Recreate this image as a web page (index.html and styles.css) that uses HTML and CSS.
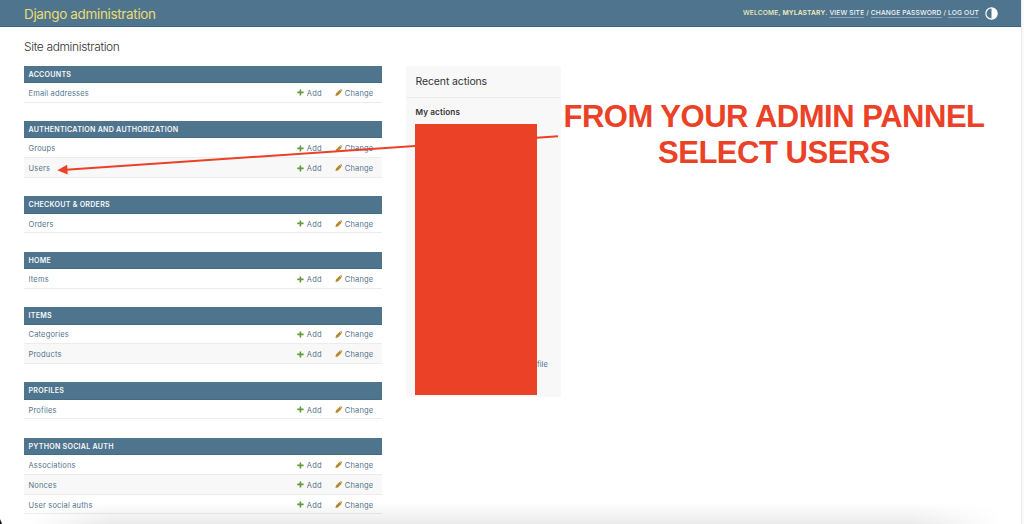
FILE: index.html
```
<!DOCTYPE html>
<html lang="en">
<head>
<meta charset="utf-8">
<title>Site administration | Django site admin</title>
<link rel="stylesheet" href="styles.css">
</head>
<body>
<svg class="defs" aria-hidden="true">
  <symbol id="plus" viewBox="0 0 7 7"><path d="M2.600 .4h1.600v2.200h2.400v1.700H4.200v2.300H2.600V4.300H.3V2.600h2.300z" fill="#5f9c37"/></symbol>
  <symbol id="pencil" viewBox="0 0 8 8"><path d="M.5 7.500l.5-2.600L5 .9l2.100 2.100-4 4zM5.500.6l.5-.4q.4-.2.700 0l1.100 1.100q.2.300 0 .7l-.4.400z" fill="#b58a30"/></symbol>
</svg>
<div class="page">
  <header class="header">
    <h1 class="brand">Django administration</h1>
    <div class="user-tools">
      <span class="tools-text">WELCOME, <strong>MYLASTARY</strong>. <a>VIEW SITE</a> / <a>CHANGE PASSWORD</a> / <a>LOG OUT</a></span>
      <svg class="theme" viewBox="0 0 12 12"><circle cx="6" cy="6" r="5.200" fill="none" stroke="#fff" stroke-width="1.100"/><path d="M6 .6a5.400 5.400 0 0 1 0 10.800z" fill="#fff"/></svg>
    </div>
  </header>
  <main class="content">
    <h2 class="title">Site administration</h2>
    <div class="columns">
      <div class="modules">
        <section class="module"><h3 class="caption">ACCOUNTS</h3>
          <div class="row"><a class="model">Email addresses</a><a class="add"><svg><use href="#plus"/></svg>Add</a><a class="change"><svg><use href="#pencil"/></svg>Change</a></div>
        </section>
        <section class="module"><h3 class="caption">AUTHENTICATION AND AUTHORIZATION</h3>
          <div class="row"><a class="model">Groups</a><a class="add"><svg><use href="#plus"/></svg>Add</a><a class="change"><svg><use href="#pencil"/></svg>Change</a></div>
          <div class="row"><a class="model">Users</a><a class="add"><svg><use href="#plus"/></svg>Add</a><a class="change"><svg><use href="#pencil"/></svg>Change</a></div>
        </section>
        <section class="module"><h3 class="caption">CHECKOUT &amp; ORDERS</h3>
          <div class="row"><a class="model">Orders</a><a class="add"><svg><use href="#plus"/></svg>Add</a><a class="change"><svg><use href="#pencil"/></svg>Change</a></div>
        </section>
        <section class="module"><h3 class="caption">HOME</h3>
          <div class="row"><a class="model">Items</a><a class="add"><svg><use href="#plus"/></svg>Add</a><a class="change"><svg><use href="#pencil"/></svg>Change</a></div>
        </section>
        <section class="module"><h3 class="caption">ITEMS</h3>
          <div class="row"><a class="model">Categories</a><a class="add"><svg><use href="#plus"/></svg>Add</a><a class="change"><svg><use href="#pencil"/></svg>Change</a></div>
          <div class="row"><a class="model">Products</a><a class="add"><svg><use href="#plus"/></svg>Add</a><a class="change"><svg><use href="#pencil"/></svg>Change</a></div>
        </section>
        <section class="module"><h3 class="caption">PROFILES</h3>
          <div class="row"><a class="model">Profiles</a><a class="add"><svg><use href="#plus"/></svg>Add</a><a class="change"><svg><use href="#pencil"/></svg>Change</a></div>
        </section>
        <section class="module"><h3 class="caption">PYTHON SOCIAL AUTH</h3>
          <div class="row"><a class="model">Associations</a><a class="add"><svg><use href="#plus"/></svg>Add</a><a class="change"><svg><use href="#pencil"/></svg>Change</a></div>
          <div class="row"><a class="model">Nonces</a><a class="add"><svg><use href="#plus"/></svg>Add</a><a class="change"><svg><use href="#pencil"/></svg>Change</a></div>
          <div class="row"><a class="model">User social auths</a><a class="add"><svg><use href="#plus"/></svg>Add</a><a class="change"><svg><use href="#pencil"/></svg>Change</a></div>
        </section>
      </div>
      <aside class="recent">
        <h2 class="recent-title">Recent actions</h2>
        <h3 class="recent-sub">My actions</h3>
        <div class="actions"><div class="redaction"></div><a class="action-tail">file</a></div>
      </aside>
    </div>
  </main>
  <div class="dock-shadow"></div>
  <div class="corner"></div>
  <svg class="arrow" viewBox="0 0 1024 524"><path d="M66 169.700L558 136.300" stroke="#ea4127" stroke-width="1.900"/><path d="M57.300 170.300L67.200 164.800L67.700 174.400z" fill="#ea4127"/></svg>
  <p class="note">FROM YOUR ADMIN PANNEL<br>SELECT USERS</p>
</div>
</body>
</html>
```
FILE: styles.css
```
* { box-sizing: border-box; }
body { margin: 0; background: #fff; font-family: Inter, Roboto, sans-serif; color: #333; }
h1, h2, h3, p { margin: 0; font-weight: 400; }
.defs { position: absolute; width: 0; height: 0; }
.page { position: relative; width: 1024px; height: 524px; overflow: hidden; }
.page::after { content: ""; position: absolute; top: 0; right: 0; width: 2px; height: 524px; background: #fafafa; border-left: 1px solid #ececec; }
.header { display: flex; justify-content: space-between; align-items: center; height: 27px; padding: 0 26px 0 24px; background: #4f748d; border-bottom: 1px solid #376987; }
.brand { padding-top: 1px; font-size: 13.500px; line-height: 26px; letter-spacing: -0.340px; color: #ebdc72; white-space: nowrap; }
.user-tools { display: flex; align-items: center; gap: 6px; }
.tools-text { font-size: 6.700px; font-weight: 500; letter-spacing: 0.145px; color: #f3efbd; white-space: nowrap; }
.tools-text a { color: #f5f7f8; border-bottom: 1px solid #8ba3b3; }
.tools-text strong { font-weight: 600; }
.theme { width: 13px; height: 13px; }
.content { padding: 12px 24px 0; }
.title { height: 26.500px; font-size: 12px; font-weight: 300; line-height: 16px; letter-spacing: -0.360px; }
.columns { display: flex; align-items: flex-start; gap: 24px; }
.modules { width: 358px; }
.module { margin-bottom: 18.200px; }
.caption { height: 17.500px; padding-left: 4.500px; background: #4f748d; border-bottom: 1px solid #416d89; color: #f8fafb; font-size: 7.100px; font-weight: 600; line-height: 18.600px; letter-spacing: 0.250px; }
.row { display: flex; align-items: center; height: 19.750px; padding: 3.200px 0 0 4.500px; border-bottom: 1px solid #ececec; font-size: 7.500px; line-height: 12px; letter-spacing: 0.180px; color: #54748c; white-space: nowrap; }
.row:nth-child(odd) { background: #f8f8f8; }
.model { flex: 1; }
.add { display: flex; align-items: center; gap: 2.500px; width: 38px; }
.change { display: flex; align-items: center; gap: 2px; width: 46.700px; }
.add svg, .change svg { width: 7px; height: 7px; margin-bottom: 2px; }
.change svg { width: 7.500px; height: 7.500px; }
.recent { width: 155px; height: 331px; background: #f8f8f8; }
.recent-title { height: 32px; padding-left: 9.500px; border-bottom: 1px solid #ececec; font-size: 10.500px; line-height: 32px; letter-spacing: -0.130px; }
.recent-sub { height: 26.500px; padding-left: 9.500px; font-size: 8.200px; font-weight: 600; line-height: 29px; letter-spacing: 0.100px; }
.actions { display: flex; align-items: flex-end; padding-left: 9px; }
.redaction { width: 122px; height: 271px; background: #ea4127; }
.action-tail { padding-bottom: 24px; font-size: 7.500px; line-height: 12px; color: #54748c; }
.dock-shadow { position: absolute; left: 30px; right: 24px; bottom: 0; height: 22px; background: linear-gradient(transparent, rgba(0,0,0,.08)); -webkit-mask-image: linear-gradient(90deg, transparent, #000 80px, #000 880px, transparent); mask-image: linear-gradient(90deg, transparent, #000 80px, #000 880px, transparent); }
.corner { position: absolute; left: 0; bottom: 0; width: 2px; height: 5px; background: #111; clip-path: polygon(0 0, 100% 100%, 0 100%); }
.arrow { position: absolute; left: 0; top: 0; width: 1024px; height: 524px; }
.note { position: absolute; left: 534px; top: 98.500px; width: 480px; font-family: "Liberation Sans", Arial, sans-serif; font-size: 31px; font-weight: 700; line-height: 36px; letter-spacing: -0.480px; text-align: center; color: #ea4127; white-space: nowrap; }
```
